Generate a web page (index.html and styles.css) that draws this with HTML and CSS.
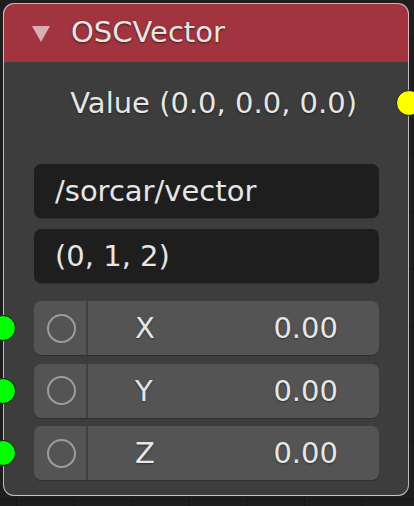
FILE: index.html
```html
<!DOCTYPE html>
<html>
<head>
<meta charset="utf-8">
<link rel="stylesheet" href="styles.css">
</head>
<body>
<div class="node">
  <div class="header">
    <svg class="tri" width="18" height="18" viewBox="0 0 18 18"><polygon points="0,1 18,1 9,17" /></svg>
    <span class="title">OSCVector</span>
  </div>
  <div class="body">
    <div class="out-row">
      <span class="out-label">Value (0.0, 0.0, 0.0)</span>
      <span class="socket socket-out"></span>
    </div>
    <div class="fields">
      <div class="field">/sorcar/vector</div>
      <div class="field">(0, 1, 2)</div>
    </div>
    <div class="inputs">
      <div class="in-row">
        <span class="socket socket-in"></span>
        <div class="toggle"><span class="ring"></span></div>
        <div class="num"><span class="label">X</span><span class="val">0.00</span></div>
      </div>
      <div class="in-row">
        <span class="socket socket-in"></span>
        <div class="toggle"><span class="ring"></span></div>
        <div class="num"><span class="label">Y</span><span class="val">0.00</span></div>
      </div>
      <div class="in-row">
        <span class="socket socket-in"></span>
        <div class="toggle"><span class="ring"></span></div>
        <div class="num"><span class="label">Z</span><span class="val">0.00</span></div>
      </div>
    </div>
  </div>
</div>
</body>
</html>
```

FILE: styles.css
```css
html, body {
  margin: 0;
  padding: 0;
}
body {
  width: 414px;
  height: 506px;
  overflow: hidden;
  background-color: #1e1e1e;
  background-image:
    linear-gradient(90deg, #171717 1px, transparent 1px),
    linear-gradient(180deg, #171717 1px, transparent 1px);
  background-size: 57.6px 57.6px;
  background-position: 16px 38px;
  font-family: "DejaVu Sans", "Liberation Sans", sans-serif;
  color: #e6e6e6;
  padding: 3px 0 0 3px;
  box-sizing: border-box;
}
.node {
  width: 406px;
  height: 493px;
  box-sizing: border-box;
  border: 1px solid rgba(255, 255, 255, 0.66);
  border-radius: 11px;
  background: linear-gradient(180deg, #a1343f 0, #a1343f 58px, #3d3d3d 58px);
  display: flex;
  flex-direction: column;
}
.header {
  height: 57px;
  display: flex;
  align-items: center;
  padding-left: 28px;
  flex: none;
}
.tri {
  fill: rgba(255, 255, 255, 0.6);
  margin-top: 2px;
}
.title {
  font-size: 29px;
  line-height: 57px;
  margin-left: 21px;
  text-shadow: 0 1px 2px rgba(0, 0, 0, 0.55);
}
.body {
  flex: 1;
  padding: 16px 29px 0 30px;
  display: flex;
  flex-direction: column;
}
.out-row {
  position: relative;
  height: 52px;
  display: flex;
  align-items: center;
  justify-content: flex-end;
  padding-right: 22px;
}
.out-label {
  font-size: 29px;
  line-height: 52px;
  text-shadow: 0 1px 2px rgba(0, 0, 0, 0.5);
}
.socket {
  position: absolute;
  top: 50%;
  width: 24px;
  height: 24px;
  margin-top: -13px;
  border-radius: 50%;
  border: 1px solid #1a1a1a;
}
.socket-out {
  right: -43px;
  background: #ffff00;
}
.socket-in {
  left: -44px;
  background: #00ff00;
}
.fields {
  margin-top: 35px;
  display: flex;
  flex-direction: column;
  gap: 11px;
}
.field {
  height: 54px;
  background: #1e1e1e;
  border-radius: 7px;
  font-size: 29px;
  line-height: 54px;
  padding-left: 21px;
  box-shadow: 0 1px 0 rgba(0, 0, 0, 0.15);
}
.inputs {
  margin-top: 18px;
  display: flex;
  flex-direction: column;
  gap: 8.5px;
}
.in-row {
  position: relative;
  height: 54px;
  display: flex;
  background: #545454;
  border-radius: 7px;
  box-shadow: 0 1px 1px rgba(0, 0, 0, 0.25);
}
.toggle {
  width: 54px;
  flex: none;
  display: flex;
  align-items: center;
  justify-content: center;
  border-right: 2px solid #404040;
  box-sizing: border-box;
}
.ring {
  width: 25px;
  height: 25px;
  border-radius: 50%;
  border: 2px solid #9c9c9c;
  margin-left: 2px;
}
.num {
  flex: 1;
  display: flex;
  justify-content: space-between;
  align-items: center;
  padding: 0 41px 0 47px;
  font-size: 29px;
  line-height: 54px;
  text-shadow: 0 1px 2px rgba(0, 0, 0, 0.45);
}
```
